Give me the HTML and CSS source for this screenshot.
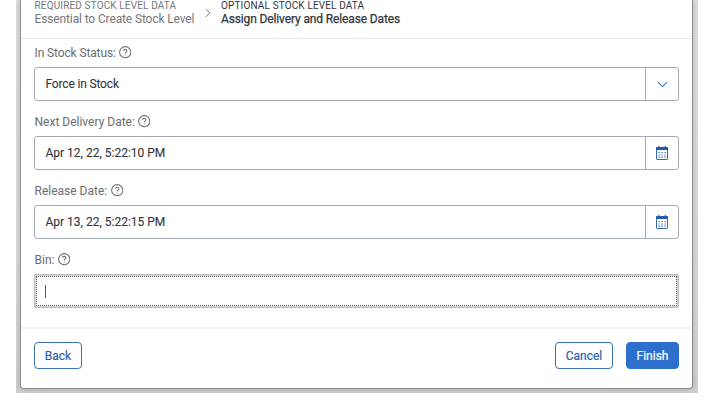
FILE: index.html
```
<!DOCTYPE html>
<html lang="en">
<head>
<meta charset="utf-8">
<title>Create Stock Level</title>
<link rel="stylesheet" href="styles.css">
</head>
<body>
<svg class="defs" width="0" height="0">
  <symbol id="help" viewBox="0 0 12 12"><circle cx="6" cy="6" r="5.4"/><path d="M4.4 4.7Q4.5 3.2 6 3.2T7.6 4.6Q7.6 5.4 6.8 5.9Q6 6.4 6 7.1M6 8.3V9.2"/></symbol>
  <symbol id="calendar" viewBox="0 0 12 14"><rect x=".5" y="1.5" width="11" height="12" rx=".6"/><path class="solid" d="M0 1.2H2V.3H3.5V1.2H8.5V.3H10V1.2H12V4H0Z"/><path class="dots" d="M2.4 6.5H9.7M2.4 9H9.7M2.4 11.2H9.7"/></symbol>
</svg>
<div class="backdrop">
  <main class="dialog">
    <nav class="steps">
      <div class="step first"><span class="title">REQUIRED STOCK LEVEL DATA</span><span class="desc">Essential to Create Stock Level</span></div>
      <svg class="separator" viewBox="0 0 6 10"><path d="M1 1.2L4.8 5L1 8.8"/></svg>
      <div class="step current"><span class="title">OPTIONAL STOCK LEVEL DATA</span><span class="desc">Assign Delivery and Release Dates</span></div>
    </nav>
    <form class="form">
      <div class="field">
        <div class="label"><span class="tight">In Stock Status:</span><svg class="help"><use href="#help"/></svg></div>
        <div class="control"><span class="value status">Force in Stock</span><span class="addon"><svg class="chevron" viewBox="0 0 12 7"><path d="M1 1L6 5.7L11 1"/></svg></span></div>
      </div>
      <div class="field">
        <div class="label"><span>Next Delivery Date:</span><svg class="help"><use href="#help"/></svg></div>
        <div class="control"><span class="value">Apr 12, 22, 5:22:10 PM</span><span class="addon"><svg class="calendar"><use href="#calendar"/></svg></span></div>
      </div>
      <div class="field">
        <div class="label"><span>Release Date:</span><svg class="help"><use href="#help"/></svg></div>
        <div class="control"><span class="value">Apr 13, 22, 5:22:15 PM</span><span class="addon"><svg class="calendar"><use href="#calendar"/></svg></span></div>
      </div>
      <div class="field">
        <div class="label"><span>Bin:</span><svg class="help"><use href="#help"/></svg></div>
        <div class="control focused"><div class="focus"><i class="caret"></i></div></div>
      </div>
    </form>
    <footer class="footer">
      <button class="button back">Back</button>
      <button class="button cancel">Cancel</button>
      <button class="button finish">Finish</button>
    </footer>
  </main>
</div>
</body>
</html>
```
FILE: styles.css
```
* { box-sizing: border-box; }
body { margin: 0; background: #fff; font-family: Roboto, "Liberation Sans", sans-serif; font-size: 12px; color: #32363a; overflow: hidden; }
.defs { display: block; }
svg { fill: none; flex: none; }
.backdrop { width: 682px; height: 393px; margin-left: 16px; padding: 0 5px 4px 4px; background: linear-gradient(#dcdcdc, #d8d8d8 65%, #cecece); overflow: hidden; }
.dialog { height: 389px; background: #fff; border: 1px solid #8f8f8f; border-top: 0; border-radius: 0 0 4px 4px; box-shadow: 0 0 5px #0003; }
.steps { display: flex; height: 39px; padding-left: 13.5px; border-bottom: 1px solid #e5e5e5; color: #74777a; }
.step span { display: block; white-space: nowrap; }
.title { height: 12px; line-height: 12px; font-size: 10px; letter-spacing: .14px; }
.desc { height: 14px; line-height: 14px; font-size: 12px; letter-spacing: -.13px; }
.first { width: 160px; }
.separator { width: 6px; height: 10px; margin: 8px 10px 0 10.5px; stroke: #777b7e; stroke-width: 1; }
.current { color: #32363a; }
.current .desc { -webkit-text-stroke: .25px; }
.form { height: 288px; padding: 0 13px; }
.field { height: 69px; padding-top: 6px; }
.label { display: flex; align-items: center; gap: 3.5px; height: 15px; padding-left: .5px; color: #6a6d70; white-space: nowrap; }
.tight { letter-spacing: -.12px; }
.help { width: 12.5px; height: 12.5px; stroke: #6a6d70; stroke-width: 1; }
.control { display: flex; height: 34px; margin-top: 7px; border: 1px solid #a3abb4; border-radius: 3px; }
.value { flex: 1; padding-left: 10.5px; line-height: 33px; -webkit-text-stroke: .1px; }
.status { letter-spacing: -.16px; }
.addon { display: flex; align-items: center; justify-content: center; width: 33px; border-left: 1px solid #a3abb4; stroke: #3469b1; }
.chevron { width: 11px; height: 7px; stroke: #3469b1; stroke-width: 1.1; }
.calendar { width: 12px; height: 14px; stroke: #3469b1; stroke-width: 1; }
.solid { fill: #245ba8; stroke: none; }
.dots { stroke-width: 1.2; stroke-dasharray: 1.3 1.7; }
.focused { border-color: #b8bec4; padding: 1px; border-radius: 2px; background: #d2d5d8; }
.focus { flex: 1; display: flex; align-items: center; padding-left: 8px; background: #fff; border: 1px dotted #5c5c5c; }
.caret { width: 1px; height: 13px; background: #555; }
.footer { display: flex; align-items: flex-start; height: 61px; padding: 13px 13px 0; border-top: 2px solid #f1f1f1; }
.button { height: 27px; padding: 0; border: 1px solid #3d71b9; border-radius: 4px; background: #fff; color: #2c5fa9; font: 12px Roboto, "Liberation Sans", sans-serif; -webkit-text-stroke: .2px; }
.back { width: 48px; margin-right: auto; }
.cancel { width: 58px; margin-right: 13px; }
.finish { width: 53px; background: #2e6fce; border-color: #2e6fce; color: #fff; }
```
